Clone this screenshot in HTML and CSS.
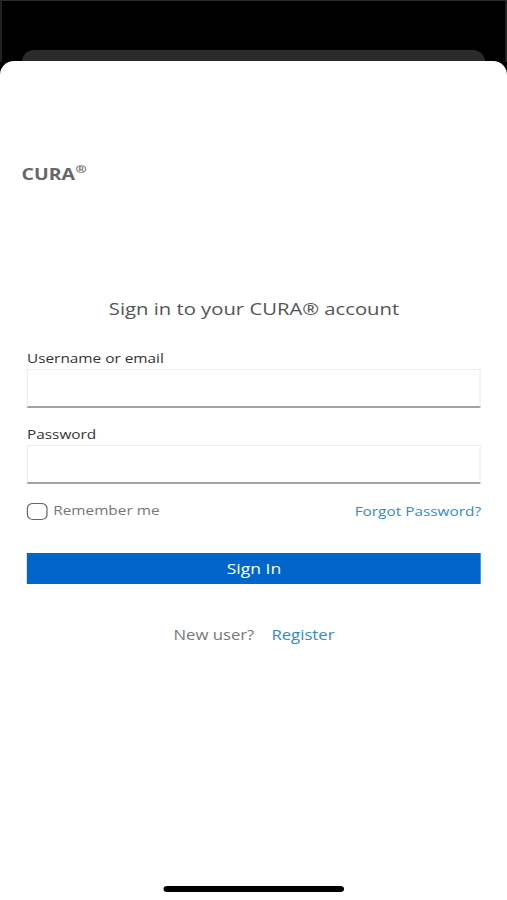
FILE: index.html
```html
<!DOCTYPE html>
<html>
<head>
<meta charset="utf-8">
<link rel="stylesheet" href="styles.css">
</head>
<body>
<div class="screen">
  <div class="backdrop"><div class="back-card"></div></div>
  <div class="sheet">
    <div class="content">
      <div class="logo">CURA<sup>®</sup></div>
      <h1 class="title">Sign in to your CURA® account</h1>
      <form class="form">
        <label class="label">Username or email</label>
        <div class="input"></div>
        <label class="label label-next">Password</label>
        <div class="input"></div>
        <div class="options">
          <div class="remember"><span class="checkbox"></span><span class="remember-text">Remember me</span></div>
          <a class="link forgot">Forgot Password?</a>
        </div>
        <div class="button">Sign In</div>
      </form>
      <div class="register"><span class="muted">New user?</span><a class="link reg-link">Register</a></div>
      <div class="spacer"></div>
      <div class="home"></div>
    </div>
  </div>
</div>
</body>
</html>
```

FILE: styles.css
```css
* { box-sizing: border-box; }
html, body { margin: 0; padding: 0; }
body { background: #000; font-family: "Open Sans", "Noto Sans", sans-serif; }
.screen { width: 507px; height: 900px; display: flex; flex-direction: column; background: #000; overflow: hidden; }
.backdrop { height: 62px; padding: 49px 20px 0 20px; border-top: 1px solid #2c2c2c; border-left: 2px solid #222; border-right: 2px solid #222; }
.back-card { height: 13px; background: #2b2b2b; border-radius: 12px 12px 0 0; }
.sheet { flex: 1; background: #fff; border-radius: 14px 14px 0 0; display: flex; margin-top: -1px; }
.content { width: 415.6px; flex: none; transform: scaleX(1.22); transform-origin: 0 0; display: flex; flex-direction: column; padding: 0 21.3px 0 22.1px; }
.logo { margin-top: 102px; margin-left: -4.5px; font-size: 16px; font-weight: 700; color: #666; line-height: 22px; }
.logo sup { font-size: 11px; line-height: 0; vertical-align: 7px; margin-left: 0.5px; font-weight: 700; }
.title { margin: 112px 0 0 0; text-align: center; font-size: 16.6px; font-weight: 400; color: #555; line-height: 24px; }
.form { display: flex; flex-direction: column; margin-top: 29px; }
.label { font-size: 12.6px; color: #333; line-height: 17px; }
.label-next { margin-top: 17.6px; }
.input { height: 39px; margin-top: 2.4px; border: 1px solid #ececec; border-bottom: 2px solid #a3a3a3; background: #fff; }
.options { display: flex; justify-content: space-between; align-items: flex-start; margin-top: 19px; height: 17px; }
.remember { display: flex; align-items: flex-start; gap: 4.5px; }
.checkbox { width: 17px; height: 17px; border: 1.8px solid #666; border-radius: 5px; flex: none; }
.remember-text { font-size: 12.6px; color: #777; line-height: 17px; margin-top: -1px; }
.link { color: #2f8cc9; }
.forgot { font-size: 12.6px; line-height: 17px; margin-top: -0.5px; }
.button { margin-top: 33px; height: 31px; background: #0066cc; color: #fff; text-align: center; font-size: 14.4px; line-height: 31px; }
.register { margin-top: 41px; text-align: center; font-size: 13.7px; line-height: 19px; }
.register .muted { color: #777; }
.reg-link { margin-left: 14px; }
.spacer { flex: 1; }
.home { width: 148px; height: 6px; background: #000; border-radius: 3px; align-self: center; margin-bottom: 8px; }
```
